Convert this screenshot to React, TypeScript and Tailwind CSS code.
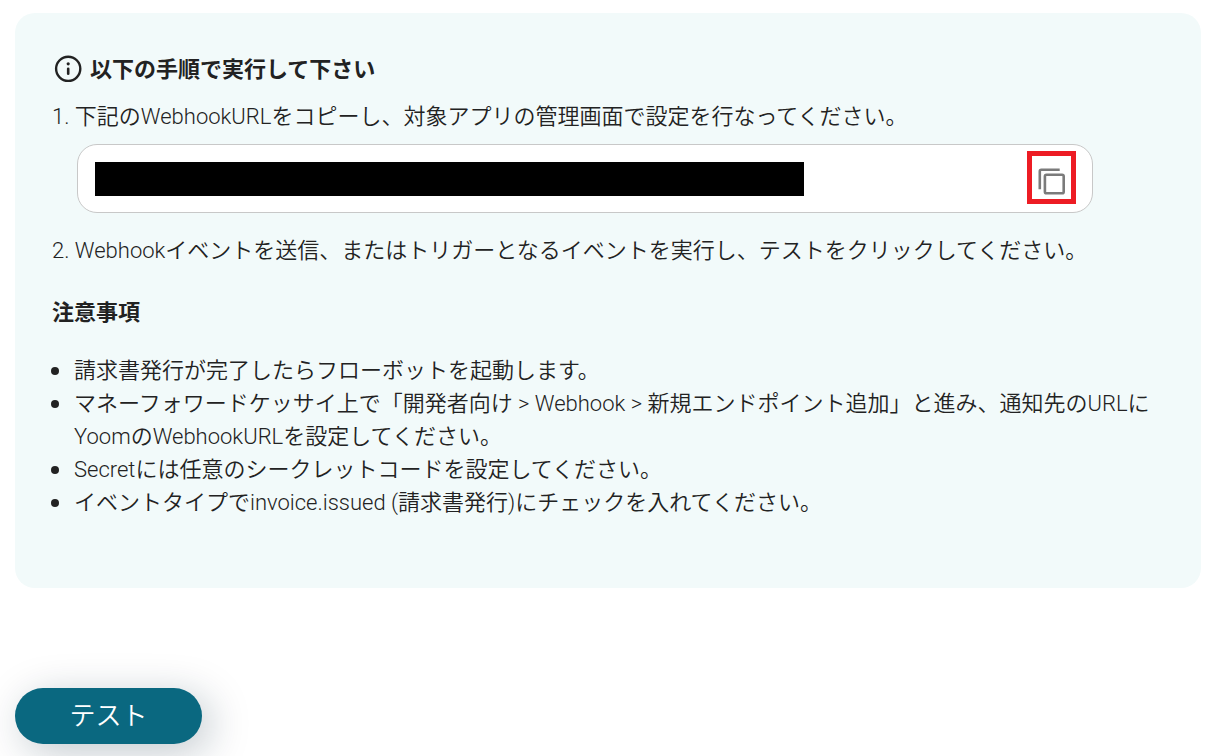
const notes = [
  "請求書発行が完了したらフローボットを起動します。",
  "マネーフォワードケッサイ上で「開発者向け > Webhook > 新規エンドポイント追加」と進み、通知先のURLにYoomのWebhookURLを設定してください。",
  "Secretには任意のシークレットコードを設定してください。",
  "イベントタイプでinvoice.issued (請求書発行)にチェックを入れてください。",
];

function InfoIcon() {
  return (
    <svg className="shrink-0" width="30" height="30" viewBox="0 0 30 30" fill="none" aria-hidden="true">
      <circle cx="16.2" cy="13.8" r="12.1" stroke="currentColor" strokeWidth="2.4" />
      <circle cx="16.2" cy="8.8" r="1.6" fill="currentColor" />
      <path d="M16.2 13.8v5" stroke="currentColor" strokeWidth="2.6" strokeLinecap="round" />
    </svg>
  );
}

function CopyIcon() {
  return (
    <svg width="39" height="43" viewBox="0 0 39 43" fill="none" stroke="#7b7b7b" strokeWidth="2.6" aria-hidden="true">
      <path d="M7.8 33.3V15.2a1.5 1.5 0 0 1 1.5-1.5h18.4" />
      <rect x="12.9" y="18.7" width="18.8" height="18.6" rx="1.6" />
    </svg>
  );
}

function WebhookUrl() {
  return (
    <div className="mt-[11px] ml-[25px] mr-[71px] h-[69px] flex items-center justify-between rounded-[20px] border border-[#c8c8c8] bg-white pl-[17px] pr-4">
      <input
        type="text"
        readOnly
        aria-label="WebhookURL"
        className="h-[34px] w-[709px] min-w-0 bg-black text-black outline-none"
      />
      <button type="button" aria-label="コピー" className="mb-[2px] shrink-0 border-[5px] border-[#ed1c24]">
        <CopyIcon />
      </button>
    </div>
  );
}

export default function App() {
  return (
    <main
      lang="ja"
      className="pt-[13px] pb-3 pl-[15px] pr-2 font-['Roboto','Noto_Sans_CJK_JP',sans-serif] font-[350] text-[22px] leading-[33px] text-[#222]"
    >
      <section className="rounded-[20px] bg-[#f2fafa] pt-10 pb-[69px] px-[37px]">
        <h2 className="flex items-center gap-2 font-bold">
          <InfoIcon />
          以下の手順で実行して下さい
        </h2>
        <ol>
          <li className="mt-[14px]">
            1. 下記のWebhookURLをコピーし、対象アプリの管理画面で設定を行なってください。
            <WebhookUrl />
          </li>
          <li className="mt-[21px]">
            2. Webhookイベントを送信、またはトリガーとなるイベントを実行し、テストをクリックしてください。
          </li>
        </ol>
        <h3 className="mt-[29px] font-bold">注意事項</h3>
        <ul className="mt-[25px] -ml-px">
          {notes.map((note) => (
            <li
              key={note}
              className="flex gap-[15px] before:mt-[13px] before:size-2 before:shrink-0 before:rounded-full before:bg-current"
            >
              {note}
            </li>
          ))}
        </ul>
      </section>
      <button
        type="button"
        className="mt-[100px] h-14 w-[187px] rounded-full bg-[#0a6880] text-[26px] text-white shadow-[8px_8px_40px_rgba(10,40,60,0.25)]"
      >
        テスト
      </button>
    </main>
  );
}
